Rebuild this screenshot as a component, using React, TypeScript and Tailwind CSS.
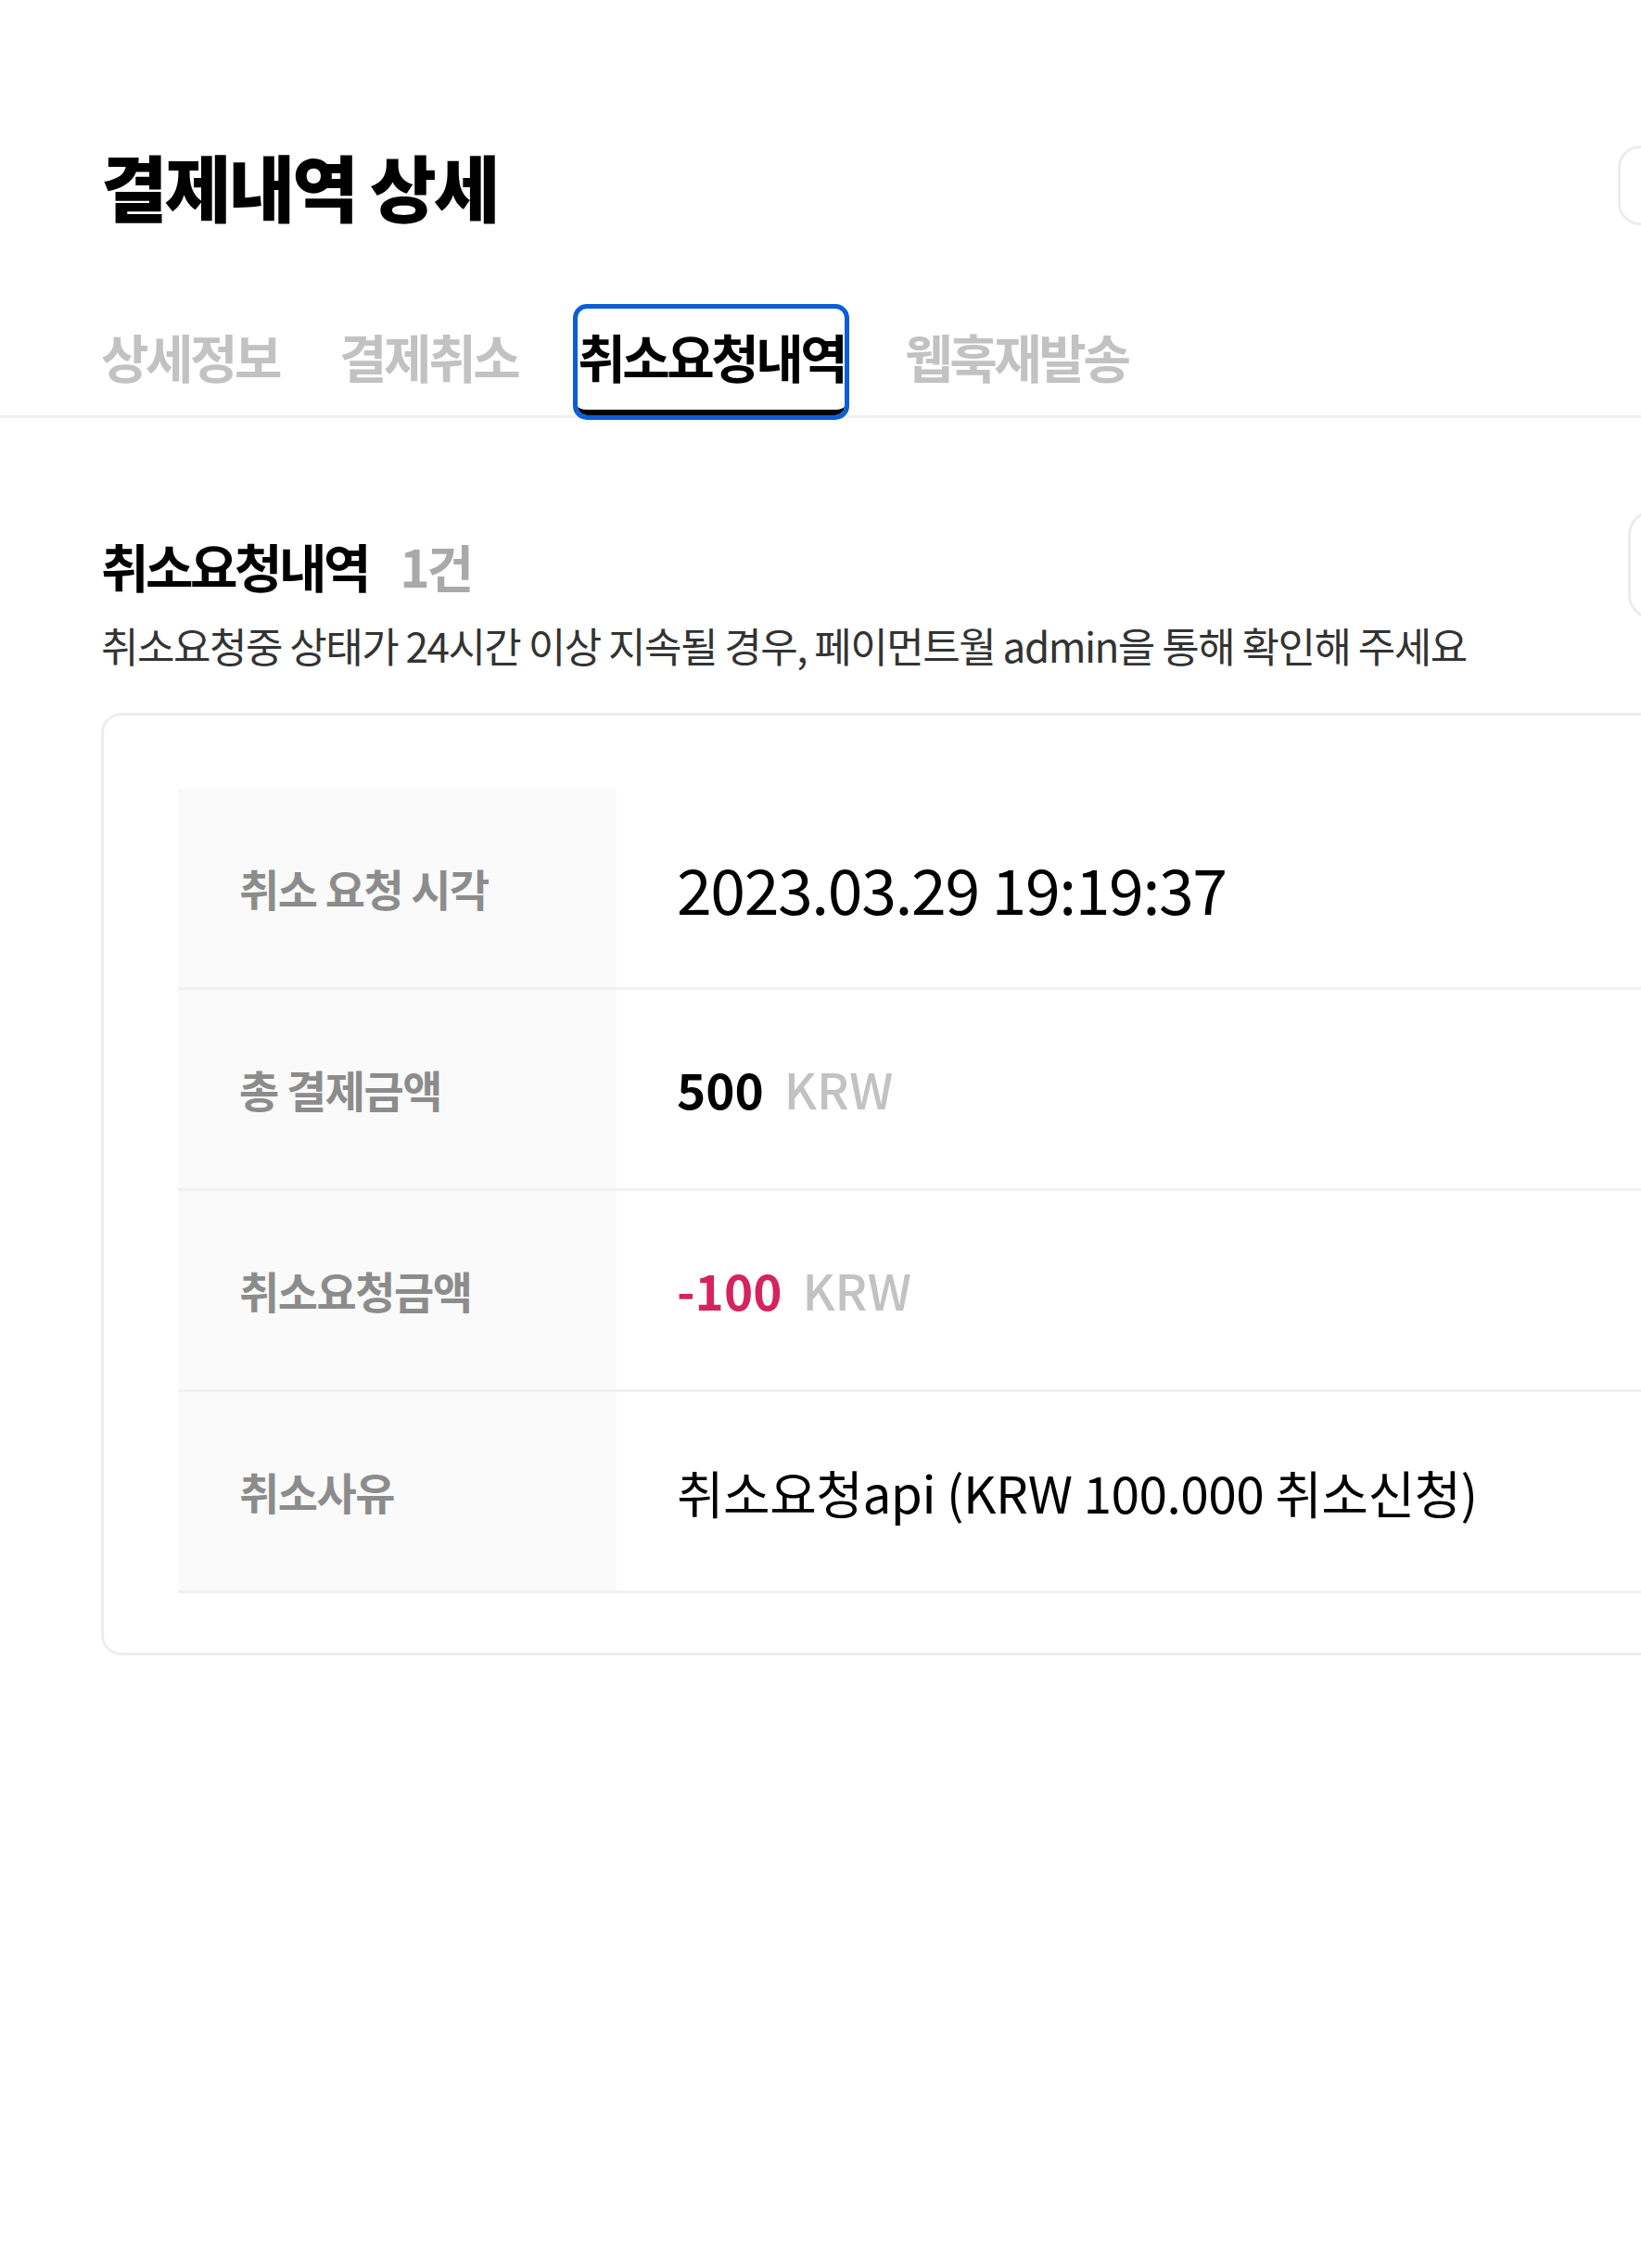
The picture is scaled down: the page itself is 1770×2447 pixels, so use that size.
import React from "react";

const tabs = [
  { label: "상세정보", active: false },
  { label: "결제취소", active: false },
  { label: "취소요청내역", active: true },
  { label: "웹훅재발송", active: false },
];

function Row({ label, children }: { label: string; children: React.ReactNode }) {
  return (
    <div className="flex h-[217px] border-b-[3px] border-[#f1f1f1]">
      <div className="flex w-[473px] shrink-0 items-center bg-[#fafafa] pl-[66px] text-[47px] font-bold tracking-[-1.5px] text-[#8c8c8c]">
        {label}
      </div>
      <div className="flex flex-1 items-center pl-[65px]">{children}</div>
    </div>
  );
}

export default function App() {
  return (
    <div className="min-h-[2447px] w-full overflow-hidden bg-white font-['Noto_Sans_CJK_KR','Noto_Sans',sans-serif] text-black">
      {/* Header */}
      <div className="flex w-[1965px] items-center justify-between pl-[109px] pt-[157px]">
        <h1 className="text-[78px] font-black leading-[86px] tracking-[-3px]">결제내역 상세</h1>
        <button className="h-[86px] w-[220px] rounded-[24px] border-[3px] border-[#ececec] bg-white" />
      </div>

      {/* Tabs */}
      <div className="mt-[90px] border-b-[3px] border-[#efefef]">
        <div className="flex gap-[65px] pl-[109px]">
          {tabs.map((t) =>
            t.active ? (
              <button
                key={t.label}
                className="rounded-[10px] border-b-[6px] border-black pt-[20px] pb-[27px] text-[56px] font-bold leading-[62px] tracking-[-3.5px] text-black outline-[5px] outline-solid outline-[#0b5ed7]"
              >
                {t.label}
              </button>
            ) : (
              <button
                key={t.label}
                className="border-b-[6px] border-transparent pt-[20px] pb-[27px] text-[56px] font-bold leading-[62px] tracking-[-3.5px] text-[#c2c2c2]"
              >
                {t.label}
              </button>
            )
          )}
        </div>
      </div>

      {/* Section */}
      <div className="mt-[100px] w-[1976px] pl-[109px]">
        <div className="flex h-[117px] items-center justify-between">
          <div className="flex items-baseline">
            <span className="text-[56px] font-bold tracking-[-3.5px]">취소요청내역</span>
            <span className="ml-[34px] text-[55px] font-bold tracking-[-3px] text-[#a9a9a9]">1건</span>
          </div>
          <button className="h-[117px] w-[220px] rounded-[26px] border-[3px] border-[#ececec] bg-white" />
        </div>
        <p className="text-[44px] leading-[56px] tracking-[-1.5px] text-[#333333]">
          취소요청중 상태가 24시간 이상 지속될 경우, 페이먼트월 admin을 통해 확인해 주세요
        </p>

        <div className="mt-[45px] rounded-[22px] border-[3px] border-[#ededed] pt-[79px] pb-[64px] pl-[80px]">
          <Row label="취소 요청 시각">
            <span className="text-[68px] font-normal tracking-[-1.4px] text-black">2023.03.29 19:19:37</span>
          </Row>
          <Row label="총 결제금액">
            <span className="text-[53px] font-semibold text-black">500</span>
            <span className="ml-[22px] text-[53px] font-medium text-[#c2c2c2]">KRW</span>
          </Row>
          <Row label="취소요청금액">
            <span className="text-[53px] font-semibold text-[#d6235d]">-100</span>
            <span className="ml-[22px] text-[53px] font-medium text-[#c2c2c2]">KRW</span>
          </Row>
          <Row label="취소사유">
            <span className="text-[55px] font-normal tracking-[-0.5px] text-black">취소요청api (KRW 100.000 취소신청)</span>
          </Row>
        </div>
      </div>
    </div>
  );
}
